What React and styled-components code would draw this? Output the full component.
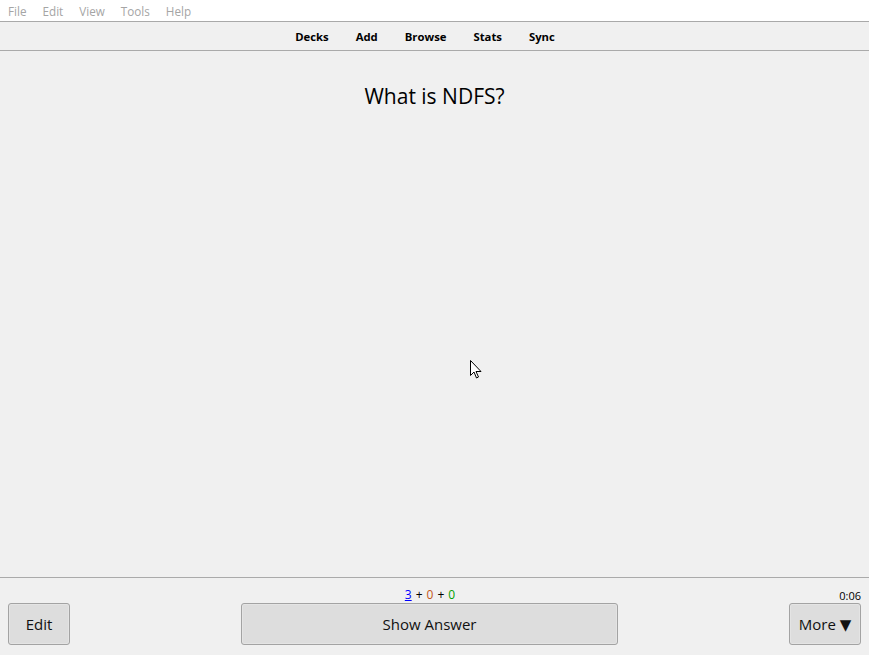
import styled, { createGlobalStyle } from 'styled-components';

const GlobalStyle = createGlobalStyle`
  html, body {
    margin: 0;
    padding: 0;
    height: 100%;
    background: #f0f0f0;
    font-family: "Open Sans", "Noto Sans", "DejaVu Sans", sans-serif;
  }
  #root {
    height: 100%;
  }
`;

const Window = styled.div`
  display: flex;
  flex-direction: column;
  height: 655px;
  position: relative;
  overflow: hidden;
`;

const MenuBar = styled.div`
  display: flex;
  align-items: center;
  height: 21px;
  padding-left: 8px;
  gap: 16px;
  background: #ffffff;
  border-bottom: 1px solid #a9a9a9;
  box-sizing: content-box;
`;

const MenuItem = styled.span`
  font-size: 11.7px;
  color: #a5a5a5;
`;

// toolbar links sit a little left of centre in the original
const Toolbar = styled.div`
  display: flex;
  justify-content: center;
  align-items: center;
  height: 28px;
  padding-right: 19px;
  background: #f0f0f0;
  border-bottom: 1px solid #aaaaaa;
  box-sizing: content-box;
`;

const ToolLink = styled.span`
  font-size: 11.3px;
  font-weight: 700;
  color: #000;
  padding: 0 13.5px;
`;

const Card = styled.div`
  flex: 1;
  display: flex;
  justify-content: center;
  align-items: flex-start;
  padding-top: 31px;
  background: #f0f0f0;
  border-bottom: 1px solid #aaaaaa;
`;

const Question = styled.div`
  font-size: 21px;
  color: #000;
`;

const Bottom = styled.div`
  height: 77px;
  display: flex;
  flex-direction: column;
  padding: 8px 8px 0;
  box-sizing: border-box;
  background: #f0f0f0;
`;

const Row = styled.div`
  display: flex;
  align-items: ${(p) => (p.$top ? 'flex-end' : 'stretch')};
  height: ${(p) => p.$height}px;
`;

const Side = styled.div`
  width: ${(p) => p.$width}px;
  display: flex;
  justify-content: ${(p) => (p.$right ? 'flex-end' : 'flex-start')};
  font-size: 11px;
  color: #000;
`;

const Middle = styled.div`
  flex: 1;
  display: flex;
  justify-content: center;
  font-size: 12px;
`;

const Count = styled.span`
  color: ${(p) => p.$color};
  text-decoration: ${(p) => (p.$underline ? 'underline' : 'none')};
`;

const Sep = styled.span`
  color: #000;
  margin: 0 4px;
`;

const Button = styled.button`
  width: ${(p) => p.$width}px;
  height: 42px;
  background: #dddddd;
  border: 1px solid #a3a3a3;
  border-radius: 3px;
  font-family: inherit;
  font-size: 15px;
  color: #111;
  padding: 0;
  box-shadow: inset 0 0 0 1px #e4e4e4;
`;

const Cursor = styled.svg`
  position: absolute;
  left: 470px;
  top: 360px;
`;

export default function App() {
  return (
    <>
      <GlobalStyle />
      <Window>
        <MenuBar>
          <MenuItem>File</MenuItem>
          <MenuItem>Edit</MenuItem>
          <MenuItem>View</MenuItem>
          <MenuItem>Tools</MenuItem>
          <MenuItem>Help</MenuItem>
        </MenuBar>
        <Toolbar>
          <ToolLink>Decks</ToolLink>
          <ToolLink>Add</ToolLink>
          <ToolLink>Browse</ToolLink>
          <ToolLink>Stats</ToolLink>
          <ToolLink>Sync</ToolLink>
        </Toolbar>
        <Card>
          <Question>What is NDFS?</Question>
        </Card>
        <Bottom>
          <Row $top $height={17}>
            <Side $width={62} />
            <Middle>
              <Count $color="#0000ff" $underline>3</Count>
              <Sep>+</Sep>
              <Count $color="#c35617">0</Count>
              <Sep>+</Sep>
              <Count $color="#00a000">0</Count>
            </Middle>
            <Side $width={71} $right>0:06</Side>
          </Row>
          <Row $height={44}>
            <Side $width={62}>
              <Button $width={62}>Edit</Button>
            </Side>
            <Middle>
              <Button $width={377}>Show Answer</Button>
            </Middle>
            <Side $width={72} $right>
              <Button $width={72}>More ▼</Button>
            </Side>
          </Row>
        </Bottom>
        <Cursor width="12" height="20" viewBox="0 0 12 20">
          <path d="M0.5 0.5 L0.5 15.5 L4 12 L6.5 18 L8.5 17 L6 11.5 L11 11.5 Z" fill="#fff" stroke="#000" strokeWidth="1" />
        </Cursor>
      </Window>
    </>
  );
}
